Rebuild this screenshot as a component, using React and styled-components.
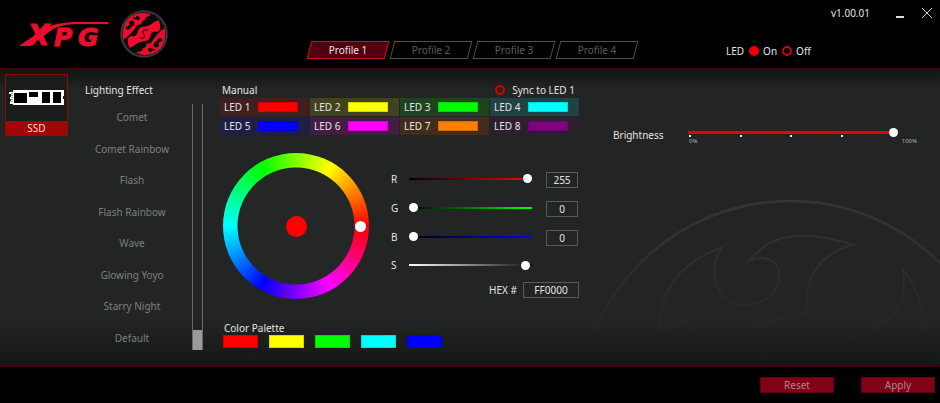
import React, { useState } from "react";
import styled, { createGlobalStyle } from "styled-components";

const GlobalStyle = createGlobalStyle`
  *, *::before, *::after { box-sizing: border-box; }
  body {
    margin: 0;
    background: #000;
    color: #e4e4e4;
    font: 10px/14px "Noto Sans", "Open Sans", sans-serif;
  }
  button, input { font: inherit; color: inherit; margin: 0; }
  button { border: 0; padding: 0; background: none; cursor: pointer; }
  h2 { margin: 0; font: inherit; }
`;

const Page = styled.div`
  display: flex;
  flex-direction: column;
  min-height: 100vh;
`;

const Header = styled.header`
  display: grid;
  grid-template-columns: 1fr auto 1fr;
  column-gap: 4px;
  min-height: 70px;
  border-bottom: 2px solid #40000c;
`;

const Brand = styled.div`
  display: flex;
  align-items: center;
  padding-left: 19px;
  gap: 9px;
`;

const Tabs = styled.nav`
  display: flex;
  align-self: end;
  gap: 1px;
  padding: 0 0 9px 5px;
`;

const Tab = styled.button`
  position: relative;
  width: 82px;
  height: 18px;
  color: ${(p) => (p.$active ? "#f0e4e6" : "#5c5c5c")};
  isolation: isolate;

  &::before {
    content: "";
    position: absolute;
    z-index: -1;
    inset: 0 2px;
    border: 1px solid ${(p) => (p.$active ? "#c4102c" : "#505050")};
    background: ${(p) => (p.$active ? "#52000f" : "#000")};
    transform: skewX(-15deg);
  }
`;

const HeaderSide = styled.div`
  display: flex;
  flex-direction: column;
  justify-content: space-between;
  padding-bottom: 10px;
`;

const WindowBar = styled.div`
  display: flex;
  justify-content: flex-end;
  align-items: center;
  padding: 4px 7px 0 0;
`;

const Version = styled.span`
  margin-right: 24px;
`;

const WindowButton = styled.button`
  display: grid;
  place-items: center;
  width: 12px;
  height: 18px;
  margin-left: ${(p) => (p.$last ? 15 : 0)}px;
`;

const RadioGroup = styled.div`
  display: flex;
  align-items: center;
  gap: 5px;
  padding-left: 84px;
`;

const RadioLabel = styled.label`
  display: flex;
  align-items: center;
  gap: ${(p) => (p.$wide ? 7 : 4)}px;
`;

const Radio = styled.input`
  appearance: none;
  width: 10px;
  height: 10px;
  border: 2px solid #d40000;
  border-radius: 50%;

  &:checked { background: #ee0000; border-color: #ee0000; }
`;

const Main = styled.main`
  position: relative;
  flex: 1;
  display: grid;
  grid-template-columns: 80px 140px 359px 1fr;
  background: linear-gradient(#131514, #232524 20px, #232524 calc(100% - 44px), #151716);
  isolation: isolate;
`;

const Watermark = styled.svg`
  position: absolute;
  z-index: -1;
  right: 0;
  bottom: 0;
  width: 360px;
  height: 185px;
`;

const DeviceColumn = styled.div`
  padding: 4px 5px;
`;

const Device = styled.button`
  display: flex;
  flex-direction: column;
  width: 63px;
  border: 1px solid #8c0c0e;
  background: #1b1d1c;
  color: #f0dada;
`;

const DevicePicture = styled.span`
  display: grid;
  place-items: center;
  width: 100%;
  height: 46px;
`;

const DeviceName = styled.span`
  width: 100%;
  background: #a00808;
`;

const EffectColumn = styled.section`
  padding: 13px 17px 15px 5px;
  display: flex;
  flex-direction: column;
  gap: 7px;
`;

const EffectBody = styled.div`
  flex: 1;
  display: flex;
`;

const EffectList = styled.div`
  flex: 1;
  display: flex;
  flex-direction: column;
  justify-content: space-between;
  padding: 6px 13px 5px 0;
`;

const Effect = styled.button`
  height: 14px;
  color: #7e807f;
`;

const ScrollTrack = styled.div`
  display: flex;
  flex-direction: column;
  justify-content: flex-end;
  width: 11px;
  border: solid #686a69;
  border-width: 0 1px;
`;

const ScrollThumb = styled.div`
  height: 20px;
  background: #9a9c9b;
`;

const ManualColumn = styled.section`
  display: flex;
  flex-direction: column;
  padding: 13px 0 17px;
`;

const ManualTitle = styled.div`
  display: flex;
  justify-content: space-between;
  padding: 0 4px 0 2px;
`;

const LedGrid = styled.div`
  display: grid;
  grid-template-columns: repeat(4, 1fr);
  gap: 1px;
  margin-top: 1px;
`;

const Led = styled.button`
  display: flex;
  align-items: center;
  justify-content: space-between;
  height: 18px;
  padding: 0 11px 0 4px;
  background: ${(p) => p.$tint};
`;

const LedSwatch = styled.span`
  width: 40px;
  height: 10px;
  background: ${(p) => p.$color};
  border: 1px solid rgba(0, 0, 0, 0.15);
`;

const Mixer = styled.div`
  display: flex;
  align-items: flex-start;
  gap: 22px;
  padding: 18px 0 0 3px;
`;

const Wheel = styled.div`
  position: relative;
  display: grid;
  place-items: center;
  flex: none;
  width: 146px;
  height: 146px;
  border-radius: 50%;
  background:
    radial-gradient(circle, #252727 58px, transparent 59px),
    conic-gradient(from 90deg, #f00, #f0f, #00f, #0ff, #0f0, #ff0, #f00);
`;

const WheelCenter = styled.span`
  width: 21px;
  height: 21px;
  border-radius: 50%;
  background: #f00;
`;

const WheelKnob = styled.span`
  position: absolute;
  right: 3px;
  width: 11px;
  height: 11px;
  border-radius: 50%;
  background: #fff;
`;

const Channels = styled.div`
  flex: 1;
  display: flex;
  flex-direction: column;
  padding: 11px 0 0;
`;

const Channel = styled.div`
  display: grid;
  grid-template-columns: 18px 123px 32px;
  align-items: center;
  height: ${(p) => (p.$last ? 28 : 29)}px;
`;

const Slider = styled.input`
  appearance: none;
  display: block;
  width: 100%;
  height: 10px;
  background: linear-gradient(${(p) => p.$track}) center / 100% ${(p) => p.$thick || 2}px no-repeat;

  &::-webkit-slider-thumb {
    appearance: none;
    width: 9px;
    height: 9px;
    border-radius: 50%;
    background: #fff;
  }
`;

const ValueBox = styled.input`
  width: ${(p) => (p.$wide ? 56 : 32)}px;
  height: 16px;
  margin: ${(p) => (p.$wide ? "0" : "3px 0 0 14px")};
  padding: 0;
  border: 1px solid #585a59;
  border-radius: 0;
  background: transparent;
  text-align: center;
`;

const HexRow = styled.label`
  display: flex;
  justify-content: flex-end;
  align-items: center;
  gap: 6px;
  margin-top: 3px;
`;

const PaletteTitle = styled.h2`
  margin-top: auto;
  padding-left: 4px;
`;

const Palette = styled.div`
  display: flex;
  gap: 11px;
  padding-left: 3px;
`;

const PaletteSwatch = styled.button`
  width: 35px;
  height: 13px;
  background: ${(p) => p.$color};
  border: 1px solid rgba(0, 0, 0, 0.15);
`;

const BrightnessColumn = styled.section`
  display: flex;
  align-items: flex-start;
  gap: 28px;
  padding: 57px 23px 0 34px;
`;

const BrightnessLabel = styled.label`
  width: 47px;
  padding-top: 1px;
`;

const BrightnessScale = styled.div`
  flex: 1;
`;

const SliderArea = styled.div`
  padding-right: 19px;
`;

const Ticks = styled.div`
  display: flex;
  justify-content: space-between;
  padding: 0 74px 0 1px;
  height: 2px;
  margin-top: -2px;
`;

const Tick = styled.span`
  width: 2px;
  height: 2px;
  background: #e8e8e8;
`;

const Limits = styled.div`
  display: flex;
  justify-content: space-between;
  padding: 0 0 0 1px;
  font-size: 6px;
  line-height: 8px;
  color: #b4b4b4;
`;

const Footer = styled.footer`
  display: flex;
  justify-content: flex-end;
  gap: 27px;
  min-height: 38px;
  padding: 10px 5px;
  border-top: 2px solid #40000c;
`;

const ActionButton = styled.button`
  width: 74px;
  height: 16px;
  border: 1px solid #5e0010;
  background: #800216;
  color: #b0848b;
  line-height: 14px;
`;

const RED = "#ee0b2b";

function Wordmark() {
  return (
    <svg width="92" height="44" viewBox="0 -10 92 44" fill={RED} role="img" aria-label="XPG">
      <g
        fontFamily="DejaVu Sans"
        fontWeight="700"
        fontStyle="italic"
        stroke={RED}
        strokeLinejoin="round"
      >
        <text x="9" y="23" fontSize="28" strokeWidth="1">X</text>
        <text x="35" y="24" fontSize="25" strokeWidth="1">P</text>
        <text x="59" y="24" fontSize="25" strokeWidth="1">G</text>
      </g>
      <path d="M0 24L22 9C32 2 44 0 60 0H90L89 2H62C46 2 36 4 26 13L11 24Z" />
    </svg>
  );
}

function Emblem() {
  const half = (
    <g>
      <path
        fill={RED}
        d="M10 86C5 62 11 40 24 26C36 14 52 8 70 9C80 9 88 12 94 18C82 16 73 20 73 29C66 28 62 34 63 42C56 54 44 58 37 64C26 70 24 80 10 86Z"
      />
      <path
        fill="#0b090a"
        d="M17 47C22 50 28 47 27 41C25 34 31 29 37 31C44 33 44 43 38 46C31 50 29 58 22 58C17 58 15 52 17 47ZM38 20C42 25 47 23 47 19C52 16 58 19 58 24C58 30 51 32 47 28C41 28 37 25 38 20Z"
      />
    </g>
  );
  return (
    <svg width="48" height="48" viewBox="0 0 140 140" aria-hidden="true">
      <defs>
        <radialGradient id="ball">
          <stop offset=".84" stopColor="#0b090a" />
          <stop offset=".95" stopColor="#3a3d42" />
          <stop offset="1" stopColor="#1c1e21" />
        </radialGradient>
      </defs>
      <circle cx="70" cy="70" r="70" fill="url(#ball)" />
      {half}
      <g transform="rotate(180 70 70)">{half}</g>
      <path
        fill="#0b090a"
        d="M108 22A14 14 0 1 0 86 38L50 44L30 72L28 108A14 14 0 1 0 54 102L90 96L110 68Z"
      />
      <path
        fill={RED}
        d="M112 30C120 44 120 62 106 64C94 60 90 68 88 77C84 92 70 90 58 94C46 97 40 108 28 110C20 96 20 78 34 76C46 80 50 72 52 63C56 48 70 50 82 46C94 43 100 32 112 30Z"
      />
      <path d="M82 59C70 55 63 62 69 70C75 78 70 85 58 81" fill="none" stroke="#2a070d" strokeWidth="3" />
    </svg>
  );
}

function SsdPicture() {
  return (
    <svg width="55" height="16" viewBox="0 0 55 16" aria-hidden="true">
      <path d="M4 0H55V6H54V9H55V15H4V14H1V11H2V9H1V7H2V4H0V2H4Z" fill="#fff" />
      <path d="M5 3H18V13H5ZM20 2H29V7H20ZM33 2H41V13H33ZM44 2H52V13H44Z" fill="#000" />
      <path d="M3 3V13" stroke="#333" strokeDasharray="1 1" />
    </svg>
  );
}

function WatermarkArt() {
  return (
    <Watermark viewBox="0 0 1080 555" aria-hidden="true">
      <defs>
        <linearGradient id="fade" gradientUnits="userSpaceOnUse" x1="0" y1="60" x2="0" y2="490">
          <stop offset="0" stopColor="#343635" />
          <stop offset=".5" stopColor="#2c2e2d" />
          <stop offset="1" stopColor="#2a2c2b" stopOpacity="0" />
        </linearGradient>
      </defs>
      <g fill="none" stroke="url(#fade)" strokeWidth="6">
        <circle cx="630" cy="697" r="634" strokeWidth="8" />
        <path d="M240 465C228 350 290 250 424 204C390 260 400 325 440 357C490 392 575 372 595 310C610 250 565 220 508 242C575 155 680 150 820 194C720 218 665 300 686 400C610 408 540 430 480 475" />
        <path d="M968 268C988 370 940 470 720 490M968 268C1015 325 1038 390 1028 480M240 465C270 425 310 420 335 450" />
      </g>
    </Watermark>
  );
}

const PROFILES = ["Profile 1", "Profile 2", "Profile 3", "Profile 4"];
const EFFECTS = ["Comet", "Comet Rainbow", "Flash", "Flash Rainbow", "Wave", "Glowing Yoyo", "Starry Night", "Default"];
const LEDS = [
  ["#ff0000", "#411f1f"],
  ["#ffff00", "#42421f"],
  ["#00ff00", "#1f421f"],
  ["#00ffff", "#1f4242"],
  ["#0000ff", "#1e1f42"],
  ["#ff00ff", "#421f42"],
  ["#ff7f00", "#422d1c"],
  ["#800080", "#2d1f2d"],
];
const CHANNELS = [
  { name: "R", value: 255, track: "90deg, #000, #f00" },
  { name: "G", value: 0, track: "90deg, #000, #0f0" },
  { name: "B", value: 0, track: "90deg, #000, #00f" },
];
const PALETTE = ["#ff0000", "#ffff00", "#00ff00", "#00ffff", "#0000ff"];

export default function App() {
  const [profile, setProfile] = useState(0);
  return (
    <Page>
      <GlobalStyle />
      <Header>
        <Brand>
          <Wordmark />
          <Emblem />
        </Brand>
        <Tabs aria-label="Profiles">
          {PROFILES.map((name, i) => (
            <Tab key={name} $active={i === profile} onClick={() => setProfile(i)}>{name}</Tab>
          ))}
        </Tabs>
        <HeaderSide>
          <WindowBar>
            <Version>v1.00.01</Version>
            <WindowButton aria-label="Minimize">
              <svg width="10" height="12" viewBox="0 0 10 12"><path d="M1 10H9" stroke="#e0e0e0" strokeWidth="2" /></svg>
            </WindowButton>
            <WindowButton $last aria-label="Close">
              <svg width="10" height="10" viewBox="0 0 10 10"><path d="M0 0L10 10M10 0L0 10" stroke="#d0d0d0" /></svg>
            </WindowButton>
          </WindowBar>
          <RadioGroup role="radiogroup" aria-label="LED">
            <span>LED</span>
            <RadioLabel><Radio type="radio" name="led" defaultChecked />On</RadioLabel>
            <RadioLabel><Radio type="radio" name="led" />Off</RadioLabel>
          </RadioGroup>
        </HeaderSide>
      </Header>

      <Main>
        <WatermarkArt />
        <DeviceColumn>
          <Device>
            <DevicePicture><SsdPicture /></DevicePicture>
            <DeviceName>SSD</DeviceName>
          </Device>
        </DeviceColumn>

        <EffectColumn>
          <h2>Lighting Effect</h2>
          <EffectBody>
            <EffectList>
              {EFFECTS.map((name) => <Effect key={name}>{name}</Effect>)}
            </EffectList>
            <ScrollTrack><ScrollThumb /></ScrollTrack>
          </EffectBody>
        </EffectColumn>

        <ManualColumn>
          <ManualTitle>
            <h2>Manual</h2>
            <RadioLabel $wide><Radio type="radio" name="sync" />Sync to LED 1</RadioLabel>
          </ManualTitle>
          <LedGrid>
            {LEDS.map(([color, tint], i) => (
              <Led key={color} $tint={tint}>LED {i + 1}<LedSwatch $color={color} /></Led>
            ))}
          </LedGrid>
          <Mixer>
            <Wheel>
              <WheelCenter />
              <WheelKnob />
            </Wheel>
            <Channels>
              {CHANNELS.map(({ name, value, track }) => (
                <Channel key={name}>
                  <label htmlFor={"slider-" + name}>{name}</label>
                  <Slider id={"slider-" + name} type="range" max="255" defaultValue={value} $track={track} />
                  <ValueBox aria-label={name + " value"} defaultValue={value} />
                </Channel>
              ))}
              <Channel $last>
                <label htmlFor="slider-S">S</label>
                <Slider id="slider-S" type="range" defaultValue="98" $track="90deg, #fff, #111" />
              </Channel>
              <HexRow>HEX #<ValueBox $wide defaultValue="FF0000" /></HexRow>
            </Channels>
          </Mixer>
          <PaletteTitle>Color Palette</PaletteTitle>
          <Palette>
            {PALETTE.map((color) => <PaletteSwatch key={color} $color={color} aria-label={color} />)}
          </Palette>
        </ManualColumn>

        <BrightnessColumn>
          <BrightnessLabel htmlFor="brightness">Brightness</BrightnessLabel>
          <BrightnessScale>
            <SliderArea>
              <Slider id="brightness" type="range" defaultValue="100" $thick={3} $track="#e80000, #e80000" />
            </SliderArea>
            <Ticks><Tick /><Tick /><Tick /><Tick /></Ticks>
            <Limits><span>0%</span><span>100%</span></Limits>
          </BrightnessScale>
        </BrightnessColumn>
      </Main>

      <Footer>
        <ActionButton>Reset</ActionButton>
        <ActionButton>Apply</ActionButton>
      </Footer>
    </Page>
  );
}
